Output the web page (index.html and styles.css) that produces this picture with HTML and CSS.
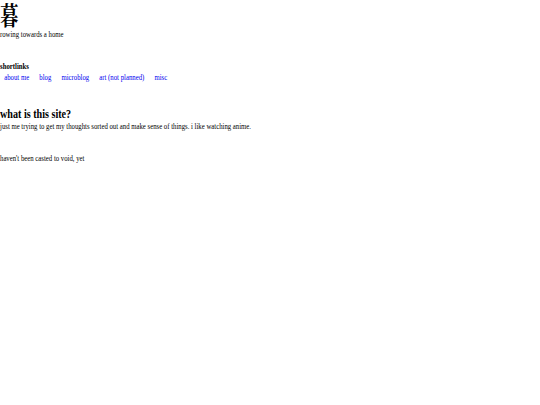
FILE: index.html
```html
<!DOCTYPE html>
<html>
<head>
<meta charset="utf-8">
<link rel="stylesheet" href="styles.css">
</head>
<body>
<div class="page">
  <header class="intro">
    <h1 class="mark">暮</h1>
    <p class="tagline">rowing towards a home</p>
  </header>
  <section class="links">
    <p class="label">shortlinks</p>
    <nav class="nav">
      <a href="#">about me</a>
      <a href="#">blog</a>
      <a href="#">microblog</a>
      <a href="#">art (not planned)</a>
      <a href="#">misc</a>
    </nav>
  </section>
  <section class="about">
    <h2 class="title">what is this site?</h2>
    <p class="text">just me trying to get my thoughts sorted out and make sense of things. i like watching anime.</p>
  </section>
  <footer class="status">
    <p class="text">haven't been casted to void, yet</p>
  </footer>
</div>
</body>
</html>
```
FILE: styles.css
```css
html, body {
  margin: 0;
  padding: 0;
  background: #ffffff;
  overflow: hidden;
}
body {
  width: 540px;
  height: 405px;
}
.page {
  width: max-content;
  transform: scale(0.421875, 0.5625);
  transform-origin: 0 0;
  font-family: "Liberation Serif", "Times New Roman", serif;
  font-size: 16px;
  line-height: 18.4px;
  color: #000000;
}
.mark {
  margin: 0;
  padding-top: 2px;
  height: 49px;
  font-family: "Noto Serif CJK JP", "Noto Sans CJK JP", "Noto Sans CJK SC", serif;
  font-size: 44px;
  line-height: 49px;
  font-weight: 700;
}
.tagline, .label, .text {
  margin: 0;
}
.links {
  margin-top: 40px;
}
.label {
  font-weight: 700;
}
.nav {
  display: flex;
  gap: 4px;
  padding-left: 0;
}
.nav a {
  color: #0000ee;
  text-decoration: none;
  padding: 0 10px;
}
.about {
  margin-top: 42px;
}
.title {
  margin: 0;
  font-size: 24px;
  line-height: 27.6px;
  font-weight: 700;
}
.status {
  margin-top: 38px;
}
```
